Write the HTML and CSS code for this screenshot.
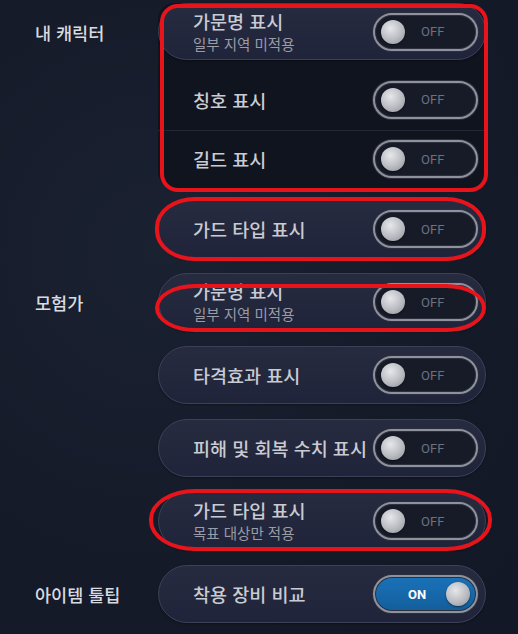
FILE: index.html
```html
<!DOCTYPE html>
<html lang="ko">
<head>
<meta charset="utf-8">
<title>설정</title>
<link rel="stylesheet" href="styles.css">
</head>
<body>
<main class="settings">
  <section class="group">
    <h2 class="group-label">내 캐릭터</h2>
    <div class="group-items">
      <div class="sub-panel mark mark-a">
        <div class="option">
          <div class="option-text">
            <span class="option-title">가문명 표시</span>
            <span class="option-sub">일부 지역 미적용</span>
          </div>
          <span class="toggle"><span class="knob"></span><span class="toggle-text">OFF</span></span>
        </div>
        <div class="sub-row sub-row-first">
          <span class="option-title">칭호 표시</span>
          <span class="toggle"><span class="knob"></span><span class="toggle-text">OFF</span></span>
        </div>
        <div class="sub-row">
          <span class="option-title">길드 표시</span>
          <span class="toggle"><span class="knob"></span><span class="toggle-text">OFF</span></span>
        </div>
      </div>
      <div class="option mark mark-b">
        <div class="option-text">
          <span class="option-title">가드 타입 표시</span>
        </div>
        <span class="toggle"><span class="knob"></span><span class="toggle-text">OFF</span></span>
      </div>
    </div>
  </section>

  <section class="group">
    <h2 class="group-label">모험가</h2>
    <div class="group-items">
      <div class="option mark mark-c">
        <div class="option-text">
          <span class="option-title">가문명 표시</span>
          <span class="option-sub">일부 지역 미적용</span>
        </div>
        <span class="toggle"><span class="knob"></span><span class="toggle-text">OFF</span></span>
      </div>
      <div class="option">
        <div class="option-text">
          <span class="option-title">타격효과 표시</span>
        </div>
        <span class="toggle"><span class="knob"></span><span class="toggle-text">OFF</span></span>
      </div>
      <div class="option">
        <div class="option-text">
          <span class="option-title">피해 및 회복 수치 표시</span>
        </div>
        <span class="toggle"><span class="knob"></span><span class="toggle-text">OFF</span></span>
      </div>
      <div class="option mark mark-d">
        <div class="option-text">
          <span class="option-title">가드 타입 표시</span>
          <span class="option-sub">목표 대상만 적용</span>
        </div>
        <span class="toggle"><span class="knob"></span><span class="toggle-text">OFF</span></span>
      </div>
    </div>
  </section>

  <section class="group">
    <h2 class="group-label">아이템 툴팁</h2>
    <div class="group-items">
      <div class="option">
        <div class="option-text">
          <span class="option-title">착용 장비 비교</span>
        </div>
        <span class="toggle toggle-on"><span class="toggle-text">ON</span><span class="knob"></span></span>
      </div>
    </div>
  </section>
</main>
</body>
</html>
```

FILE: styles.css
```css
* { box-sizing: border-box; }

html, body {
  margin: 0;
  height: 100%;
}

body {
  background: radial-gradient(ellipse at 30% 40%, #1a2131 0%, #151a28 60%, #131826 100%);
  font-family: "Noto Sans CJK KR", "Noto Sans", sans-serif;
  color: #c9cbd2;
  overflow: hidden;
}

.settings {
  display: flex;
  flex-direction: column;
  gap: 15px;
  padding-top: 3px;
}

.group {
  display: grid;
  grid-template-columns: 158px 328px;
  align-items: start;
}

.group-label {
  margin: 0;
  height: 58px;
  display: flex;
  align-items: center;
  padding-left: 35px;
  font-size: 17.5px;
  font-weight: 500;
  color: #d9dbe0;
}

.group-items {
  display: flex;
  flex-direction: column;
  gap: 15px;
}

.option {
  height: 58px;
  border-radius: 29px;
  border: 1.5px solid #3d4157;
  background: linear-gradient(180deg, #272b40 0%, #20243a 100%);
  box-shadow: 0 1px 2px rgba(0, 0, 0, 0.35);
  display: flex;
  align-items: center;
  justify-content: space-between;
  padding: 0 7px 0 34px;
}

.option-text {
  display: flex;
  flex-direction: column;
}

.option-title {
  font-size: 18.5px;
  line-height: 24px;
  font-weight: 500;
  color: #c9cbd2;
}

.option-sub {
  font-size: 14.5px;
  line-height: 22px;
  color: #9a9ca6;
}

.sub-panel {
  background: #10141f;
  border-radius: 16px;
  display: flex;
  flex-direction: column;
  height: 185px;
  margin-bottom: -3px;
}

.sub-row {
  display: flex;
  align-items: center;
  justify-content: space-between;
  padding: 0 8px 0 35px;
  height: 58px;
}

.sub-row-first {
  height: 71px;
  padding-top: 9px;
  border-bottom: 1.5px solid #222735;
}

.toggle {
  width: 105px;
  height: 38px;
  border-radius: 19px;
  border: 2.5px solid #8f929c;
  box-shadow: 0 0 0 1px #2b2f3e, inset 0 0 0 1px #2b2f3e;
  background: #171b28;
  display: flex;
  align-items: center;
  padding: 0 6px;
  flex: none;
}

.knob {
  width: 24px;
  height: 24px;
  border-radius: 50%;
  background: radial-gradient(circle at 40% 35%, #e6e7ea 0%, #b9bbc1 55%, #8c8f98 100%);
  box-shadow: 0 1px 2px rgba(0, 0, 0, 0.5);
  flex: none;
}

.toggle-text {
  font-family: Roboto, "Liberation Sans", sans-serif;
  font-size: 13px;
  color: #6b717f;
  padding-left: 16px;
}

.toggle-on {
  background: linear-gradient(180deg, #1a72b8 0%, #135e9c 100%);
  justify-content: space-between;
}

.toggle-on .toggle-text {
  color: #ffffff;
  font-weight: 700;
  padding-left: 27px;
}

/* red annotation outlines */
.mark { position: relative; }

.mark::after {
  content: "";
  position: absolute;
  border: 4px solid #e8141c;
  pointer-events: none;
}

.mark-a::after {
  top: 1px; left: 2px; right: -2px; bottom: -4px;
  border-radius: 18px;
}

.mark-b::after {
  top: -4px; left: -4px; right: -1px; bottom: -4px;
  border-radius: 40px / 30px;
}

.mark-c::after {
  top: 10px; left: -4px; right: -1px; bottom: -2px;
  border-radius: 40px / 24px;
}

.mark-d::after {
  top: -4px; left: -10px; right: -7px; bottom: -2px;
  border-radius: 46px / 30px;
}
```
